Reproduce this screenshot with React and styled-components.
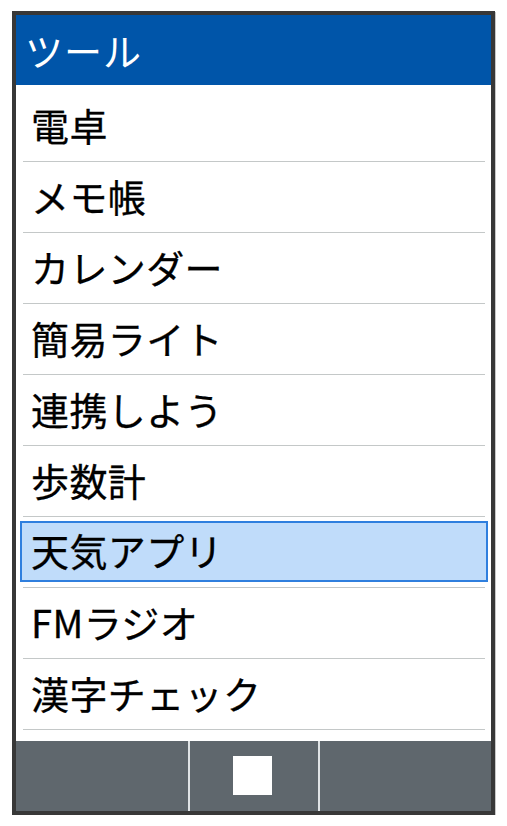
import React from 'react'
import styled, { createGlobalStyle } from 'styled-components'

const GlobalStyle = createGlobalStyle`
  html, body {
    margin: 0;
    padding: 0;
    background: #ffffff;
  }
  body {
    font-family: "Noto Sans CJK JP", "Noto Sans", sans-serif;
  }
`;

const Frame = styled.div`
  box-sizing: border-box;
  width: 483px;
  height: 804px;
  margin: 11px 0 0 12px;
  border: 4px solid #383838;
  box-shadow: 1px 1px 0 #c8c8c8;
  display: flex;
  flex-direction: column;
  background: #ffffff;
`;

const Header = styled.header`
  height: 70px;
  flex: none;
  display: flex;
  align-items: center;
  padding-left: 9px;
  padding-bottom: 2px;
  box-sizing: border-box;
  background: #0055a9;
  color: #ffffff;
  font-size: 38px;
  letter-spacing: 1px;
`;

const List = styled.ul`
  list-style: none;
  margin: 0;
  padding: 6px 0 0;
  flex: 1;
`;

const Row = styled.li`
  box-sizing: border-box;
  height: 71px;
  margin: 0 6px 0 7px;
  border-bottom: 1px solid #c4c8c8;
  display: flex;
  align-items: stretch;
`;

const Label = styled.div`
  flex: 1;
  display: flex;
  align-items: center;
  margin: ${p => (p.$selected ? '4px -3px 5px -3px' : '0')};
  padding-left: ${p => (p.$selected ? '9px' : '8px')};
  padding-bottom: 4px;
  background: ${p => (p.$selected ? '#c0dcfa' : 'transparent')};
  border: ${p => (p.$selected ? '2px solid #2f7fde' : 'none')};
  font-size: 38px;
  letter-spacing: 0.4px;
  color: #000000;
  -webkit-text-stroke: 0.3px #000000;
`;

const BottomBar = styled.footer`
  height: 70px;
  flex: none;
  display: grid;
  grid-template-columns: 172px 128px 1fr;
  gap: 2px;
  background: #dfe3e5;
`;

const Key = styled.div`
  background: #5f676d;
  display: flex;
  align-items: center;
  justify-content: center;
`;

const StopIcon = styled.div`
  width: 39px;
  height: 39px;
  margin: -1px 3px 0 0;
  background: #ffffff;
`;

const items = [
  '電卓',
  'メモ帳',
  'カレンダー',
  '簡易ライト',
  '連携しよう',
  '歩数計',
  '天気アプリ',
  'FMラジオ',
  '漢字チェック',
];

export default function App() {
  return (
    <>
      <GlobalStyle />
      <Frame>
        <Header>ツール</Header>
        <List>
          {items.map((item, i) => (
            <Row key={item}>
              <Label $selected={i === 6}>{item}</Label>
            </Row>
          ))}
        </List>
        <BottomBar>
          <Key />
          <Key>
            <StopIcon />
          </Key>
          <Key />
        </BottomBar>
      </Frame>
    </>
  )
}
